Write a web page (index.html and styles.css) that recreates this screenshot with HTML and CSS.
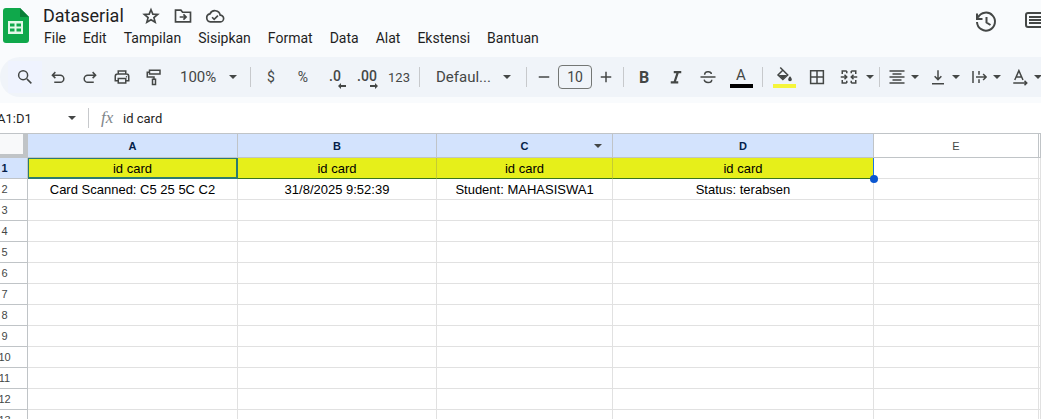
FILE: index.html
```html
<!DOCTYPE html>
<html lang="id">
<head>
<meta charset="utf-8">
<meta name="viewport" content="width=device-width, initial-scale=1">
<title>Dataserial</title>
<link rel="stylesheet" href="styles.css">
</head>
<body>
<svg class="defs" aria-hidden="true">
  <symbol id="caret" viewBox="0 0 10 6"><path d="M1 1h8L5 5z"/></symbol>
</svg>
<div class="app">
  <header class="topbar">
    <svg class="logo" viewBox="0 0 26 35" aria-label="Sheets">
      <path d="M3 0h14l9 9v23a3 3 0 0 1-3 3H3a3 3 0 0 1-3-3V3a3 3 0 0 1 3-3z" fill="#0fa84b"/>
      <path d="M17 0l9 9h-9z" fill="#0a7f38"/>
      <path d="M5 13h15v13H5z" fill="#e4f8e9"/>
      <path d="M7 15.500h4.500v3H7zM13.500 15.500H18v3h-4.500zM7 20.500h4.500v3H7zM13.500 20.500H18v3h-4.500z" fill="#0fa84b"/>
    </svg>
    <div class="titles">
      <div class="title-row">
        <h1 class="title">Dataserial</h1>
        <button class="mini" aria-label="Bintangi"><svg viewBox="0 0 24 24"><path class="line" d="M12 4.500l2.200 5.300 5.800.4-4.500 3.800 1.500 5.600-5-3-5 3L8.500 14 4 10.200l5.800-.4z"/></svg></button>
        <button class="mini" aria-label="Pindahkan"><svg viewBox="0 0 24 24"><path class="line" d="M3 5h6.500l2 2.500H21V19H3zM8 13.200h7M12.500 10l3.200 3.200-3.200 3.200"/></svg></button>
        <button class="mini" aria-label="Status dokumen"><svg viewBox="0 0 24 24"><path class="line" d="M6.500 19a4.800 4.800 0 0 1-.5-9.500 6.400 6.400 0 0 1 12.200 1.500 4 4 0 0 1 .3 8zM8.500 13.500l2.500 2.500 4.500-4.500"/></svg></button>
      </div>
      <nav class="menu">
        <button>File</button><button>Edit</button><button>Tampilan</button><button>Sisipkan</button><button>Format</button><button>Data</button><button>Alat</button><button>Ekstensi</button><button>Bantuan</button>
      </nav>
    </div>
    <div class="actions">
      <button aria-label="Histori"><svg viewBox="0 0 24 24"><path class="line" d="M4 7.500A9 9 0 1 1 3 12M3 3.500V9h5.500M12.500 7v5.500l4 2.500"/></svg></button>
      <button aria-label="Komentar"><svg viewBox="0 0 24 24"><path class="line" d="M22 20l-4-3H4a2 2 0 0 1-2-2V5a2 2 0 0 1 2-2h18zM5 7h14M5 10h14M5 13h14"/></svg></button>
    </div>
  </header>

  <div class="toolbar" role="toolbar">
    <button class="tool search" aria-label="Cari"><svg viewBox="0 0 24 24"><path class="line" d="M14.500 14.500l6 6"/><circle class="line" cx="9.500" cy="9.500" r="6"/></svg></button>
    <button class="tool" aria-label="Urungkan"><svg viewBox="0 0 24 24"><path class="line" d="M8.500 5.500L4.500 9.500l4 4M5 9.500h10a4.700 4.700 0 0 1 0 9.500H7"/></svg></button>
    <button class="tool" aria-label="Ulangi"><svg viewBox="0 0 24 24"><path class="line" d="M15.500 5.500l4 4-4 4M19 9.500H9A4.700 4.700 0 0 0 9 19h8"/></svg></button>
    <button class="tool" aria-label="Cetak"><svg viewBox="0 0 24 24"><path class="line" d="M7 8V4h10v4M7 17H3v-6a3 3 0 0 1 3-3h12a3 3 0 0 1 3 3v6h-4M7 14h10v6H7z"/><circle cx="18" cy="11.500" r="1"/></svg></button>
    <button class="tool" aria-label="Salin format"><svg viewBox="0 0 24 24"><path class="line" d="M6 3h14v5H6zM6 5.500H3V12h9v3M10 15h4v7h-4z"/></svg></button>
    <label class="pick zoom"><select aria-label="Zoom"><option>100%</option></select><svg class="caret"><use href="#caret"/></svg></label>
    <span class="sep"></span>
    <button class="tool">$</button>
    <button class="tool">%</button>
    <button class="tool dec" aria-label="Kurangi desimal"><span>.0</span><svg viewBox="0 0 8 6"><path d="M0 3l3-3v2h5v2H3v2z"/></svg></button>
    <button class="tool dec" aria-label="Tambah desimal"><span>.00</span><svg viewBox="0 0 8 6"><path d="M8 3L5 0v2H0v2h5v2z"/></svg></button>
    <button class="tool small">123</button>
    <span class="sep"></span>
    <label class="pick font"><select aria-label="Font"><option>Defaul...</option></select><svg class="caret"><use href="#caret"/></svg></label>
    <span class="sep"></span>
    <button class="tool step" aria-label="Perkecil"><svg viewBox="0 0 24 24"><path class="line" d="M5 12h14"/></svg></button>
    <input class="size" aria-label="Ukuran font" value="10">
    <button class="tool step" aria-label="Perbesar"><svg viewBox="0 0 24 24"><path class="line" d="M5 12h14M12 5v14"/></svg></button>
    <span class="sep"></span>
    <button class="tool bold">B</button>
    <button class="tool" aria-label="Miring"><svg viewBox="0 0 24 24"><path class="heavy" d="M9 5.500h10M5 19h10M14.500 5.500L10 19"/></svg></button>
    <button class="tool" aria-label="Coret"><svg viewBox="0 0 24 24"><path class="line" d="M2 12h20M7.500 9c0-5 8.500-5 9-1M7 15.500c.5 5 10 5 10 0"/></svg></button>
    <button class="tool color"><span>A</span><i class="bar black"></i></button>
    <span class="sep"></span>
    <button class="tool color" aria-label="Warna isian"><svg viewBox="0 0 24 24"><path class="line" d="M7 2l10 10-6.500 6L4 12l7-7"/><path d="M5 12h11l-5.500 5.500zM20 13.500s2.500 2.600 2.500 4.200a2.500 2.500 0 0 1-5 0c0-1.600 2.500-4.200 2.500-4.200z"/></svg><i class="bar yellow"></i></button>
    <button class="tool" aria-label="Batas"><svg viewBox="0 0 24 24"><path class="line" d="M3.500 3.500h17v17h-17zM12 3.500v17M3.500 12h17"/></svg></button>
    <button class="tool" aria-label="Gabungkan"><svg viewBox="0 0 24 24"><path class="line" d="M9 4H3v4M9 20H3v-4M15 4h6v4M15 20h6v-4M9 4v3M9 20v-3M15 4v3M15 20v-3M1 12h8M6 9l3 3-3 3M23 12h-8M18 9l-3 3 3 3"/></svg></button>
    <button class="more" aria-label="Opsi gabung"><svg class="caret"><use href="#caret"/></svg></button>
    <span class="sep"></span>
    <button class="combo" aria-label="Perataan horizontal"><svg viewBox="0 0 24 24"><path class="line" d="M2 4h20M6 8h12M2 12h20M6 16h12M2 20h20"/></svg><svg class="caret"><use href="#caret"/></svg></button>
    <button class="combo" aria-label="Perataan vertikal"><svg viewBox="0 0 24 24"><path class="line" d="M12 3v12M7.500 11l4.500 4.500 4.500-4.500M4 21h16"/></svg><svg class="caret"><use href="#caret"/></svg></button>
    <button class="combo" aria-label="Pemenggalan teks"><svg viewBox="0 0 24 24"><path class="line" d="M4 4v16M12 4v5M12 15v5M8 12h13M17.500 8l4 4-4 4"/></svg><svg class="caret"><use href="#caret"/></svg></button>
    <button class="combo" aria-label="Rotasi teks"><svg viewBox="0 0 24 24"><path class="line" d="M5 16l5.500-12.500L16 16M7 12h7M3 20h18M18 17l3 3-3 3"/></svg><svg class="caret"><use href="#caret"/></svg></button>
  </div>

  <div class="formula">
    <input class="name" aria-label="Kotak nama" value="A1:D1">
    <button class="more" aria-label="Rentang"><svg class="caret"><use href="#caret"/></svg></button>
    <span class="sep"></span>
    <label class="fx" for="fx">fx</label>
    <input class="expr" id="fx" value="id card">
  </div>

  <table class="sheet">
    <colgroup><col class="w-n"><col class="w-a"><col class="w-b"><col class="w-c"><col class="w-d"><col class="w-e"><col></colgroup>
    <thead>
      <tr><th class="corner"></th><th class="on">A</th><th class="on">B</th><th class="on"><span class="menu-col">C<svg class="caret"><use href="#caret"/></svg></span></th><th class="on">D</th><th>E</th><th></th></tr>
    </thead>
    <tbody>
      <tr class="picked"><th class="on">1</th><td class="active">id card</td><td>id card</td><td>id card</td><td class="last">id card<i class="handle"></i></td><td></td><td></td></tr>
      <tr><th>2</th><td>Card Scanned: C5 25 5C C2</td><td>31/8/2025 9:52:39</td><td>Student: MAHASISWA1</td><td>Status: terabsen</td><td></td><td></td></tr>
      <tr><th>3</th><td></td><td></td><td></td><td></td><td></td><td></td></tr>
      <tr><th>4</th><td></td><td></td><td></td><td></td><td></td><td></td></tr>
      <tr><th>5</th><td></td><td></td><td></td><td></td><td></td><td></td></tr>
      <tr><th>6</th><td></td><td></td><td></td><td></td><td></td><td></td></tr>
      <tr><th>7</th><td></td><td></td><td></td><td></td><td></td><td></td></tr>
      <tr><th>8</th><td></td><td></td><td></td><td></td><td></td><td></td></tr>
      <tr><th>9</th><td></td><td></td><td></td><td></td><td></td><td></td></tr>
      <tr><th>10</th><td></td><td></td><td></td><td></td><td></td><td></td></tr>
      <tr><th>11</th><td></td><td></td><td></td><td></td><td></td><td></td></tr>
      <tr><th>12</th><td></td><td></td><td></td><td></td><td></td><td></td></tr>
      <tr><th>13</th><td></td><td></td><td></td><td></td><td></td><td></td></tr>
    </tbody>
  </table>
</div>
</body>
</html>
```
FILE: styles.css
```css
* { box-sizing: border-box; }
body {
  margin: 0;
  background: #f9fbfd;
  color: #1f1f1f;
  font-family: Roboto, "Liberation Sans", sans-serif;
}
.app { height: 100vh; overflow: hidden; }
.defs { display: none; }
button, input, select {
  margin: 0;
  padding: 0;
  border: 0;
  background: none;
  color: inherit;
  font: inherit;
  outline: 0;
}
svg { display: block; flex: none; fill: #444746; }
.line { fill: none; stroke: #444746; stroke-width: 2; }
.heavy { fill: none; stroke: #444746; stroke-width: 3; }
.caret { width: 10px; height: 6px; }

.topbar { display: flex; height: 57px; padding-left: 3px; }
.logo { width: 26px; height: 35px; margin-top: 8px; }
.titles { padding: 4px 0 0 14px; }
.title-row { display: flex; align-items: center; height: 23px; }
.title { margin: 0 11px 0 0; font-size: 18px; font-weight: 400; line-height: 23px; }
.mini { width: 32px; height: 20px; }
.mini svg { width: 20px; height: 20px; margin: auto; }
.menu { display: flex; gap: 17px; height: 22px; padding-left: 1px; font-size: 14px; line-height: 22px; }
.actions { display: flex; gap: 26px; margin: 10px -7px 0 auto; }
.actions button { height: 24px; }
.actions svg { width: 24px; height: 24px; }

.toolbar {
  display: flex;
  align-items: center;
  height: 40px;
  padding-left: 8px;
  overflow: hidden;
  border-radius: 20px 0 0 20px;
  background: #f0f4f9;
  color: #444746;
  font-size: 14px;
}
.tool {
  display: flex;
  flex: none;
  align-items: center;
  justify-content: center;
  width: 32px;
  height: 32px;
  font-size: 14px;
}
.tool svg, .combo svg:first-child { width: 18px; height: 18px; }
.search { width: 34px; background: #eff3fe; }
.small { font-size: 13px; }
.pick { display: flex; flex: none; align-items: center; padding: 0 8px 0 10px; }
.pick select { flex: 1; min-width: 0; appearance: none; font-size: 15px; }
.zoom { width: 76px; }
.font { width: 98px; padding: 0 10px 0 12px; }
.sep { flex: none; width: 1px; height: 20px; margin: 0 4px; background: #c7c9cc; }
.tool.dec { flex-direction: column; padding-top: 4px; font-weight: 500; line-height: 14px; }
.tool.dec svg { align-self: flex-end; width: 8px; height: 6px; margin-right: 5px; }
.step { width: 26px; }
.size {
  flex: none;
  width: 34px;
  height: 24px;
  margin: 0 1px;
  border: 1px solid #747775;
  border-radius: 4px;
  text-align: center;
}
.bold { font-size: 16px; font-weight: 700; }
.color { flex-direction: column; width: 34px; padding-bottom: 1px; font-size: 15px; line-height: 18px; }
.bar { width: 23px; height: 4px; }
.black { background: #000; }
.yellow { background: #f5f53b; }
.more { display: flex; flex: none; align-items: center; width: 10px; height: 32px; }
.combo { display: flex; flex: none; align-items: center; gap: 4px; width: 41px; height: 32px; padding-left: 4px; }

.formula {
  display: flex;
  align-items: center;
  height: 30px;
  margin-top: 6px;
  background: #fff;
  font-size: 13px;
}
.name { width: 70px; margin-left: -3px; }
.formula .sep { margin: 0 12px 0 11px; }
.fx { width: 22px; color: #80868b; font-family: "Liberation Serif", serif; font-size: 17px; font-style: italic; }
.expr { flex: 1; }

.sheet {
  width: calc(100% + 18px);
  margin-left: -18px;
  border-top: 1px solid #c0c4c7;
  border-spacing: 0;
  table-layout: fixed;
  background: #fff;
}
.w-n { width: 46px; }
.w-a { width: 210px; }
.w-b { width: 199px; }
.w-c { width: 176px; }
.w-d { width: 261px; }
.w-e { width: 165px; }
.sheet th, .sheet td {
  height: 21px;
  padding: 0;
  border: solid #e1e1e1;
  border-width: 0 1px 1px 0;
  font-family: "Liberation Sans", Arial, sans-serif;
  font-size: 13px;
  line-height: 18px;
  text-align: center;
  color: #000;
}
.sheet td { padding-top: 2px; }
.sheet th { border-color: #c0c4c7; color: #444746; font-size: 11px; font-weight: 400; }
.sheet thead th { height: 24px; }
.sheet .on { background: #d3e3fd; color: #041e49; font-weight: 700; }
.sheet .corner { border: solid #c0c4c7; border-width: 0 5px 4px 0; background: #f8f9fa; }
.menu-col { display: grid; grid-template-columns: 1fr auto 1fr; align-items: center; }
.menu-col::before { content: ""; }
.menu-col .caret { justify-self: end; margin-right: 9px; }
.sheet .picked td:not(:nth-last-child(-n+2)) { border-right-color: #c5cb33; border-bottom-color: #38761d; background: #e6ef1a; }
.sheet .picked td.active { border-color: #2c7a70; box-shadow: inset 1px 1px #2c7a70, inset -1px -1px #2c7a70; }
.sheet .picked td.last { position: relative; border-right-color: #1a73e8; }
.handle {
  position: absolute;
  right: -5px;
  bottom: -5px;
  z-index: 1;
  width: 8px;
  height: 8px;
  border-radius: 50%;
  background: #0b57d0;
}
```
